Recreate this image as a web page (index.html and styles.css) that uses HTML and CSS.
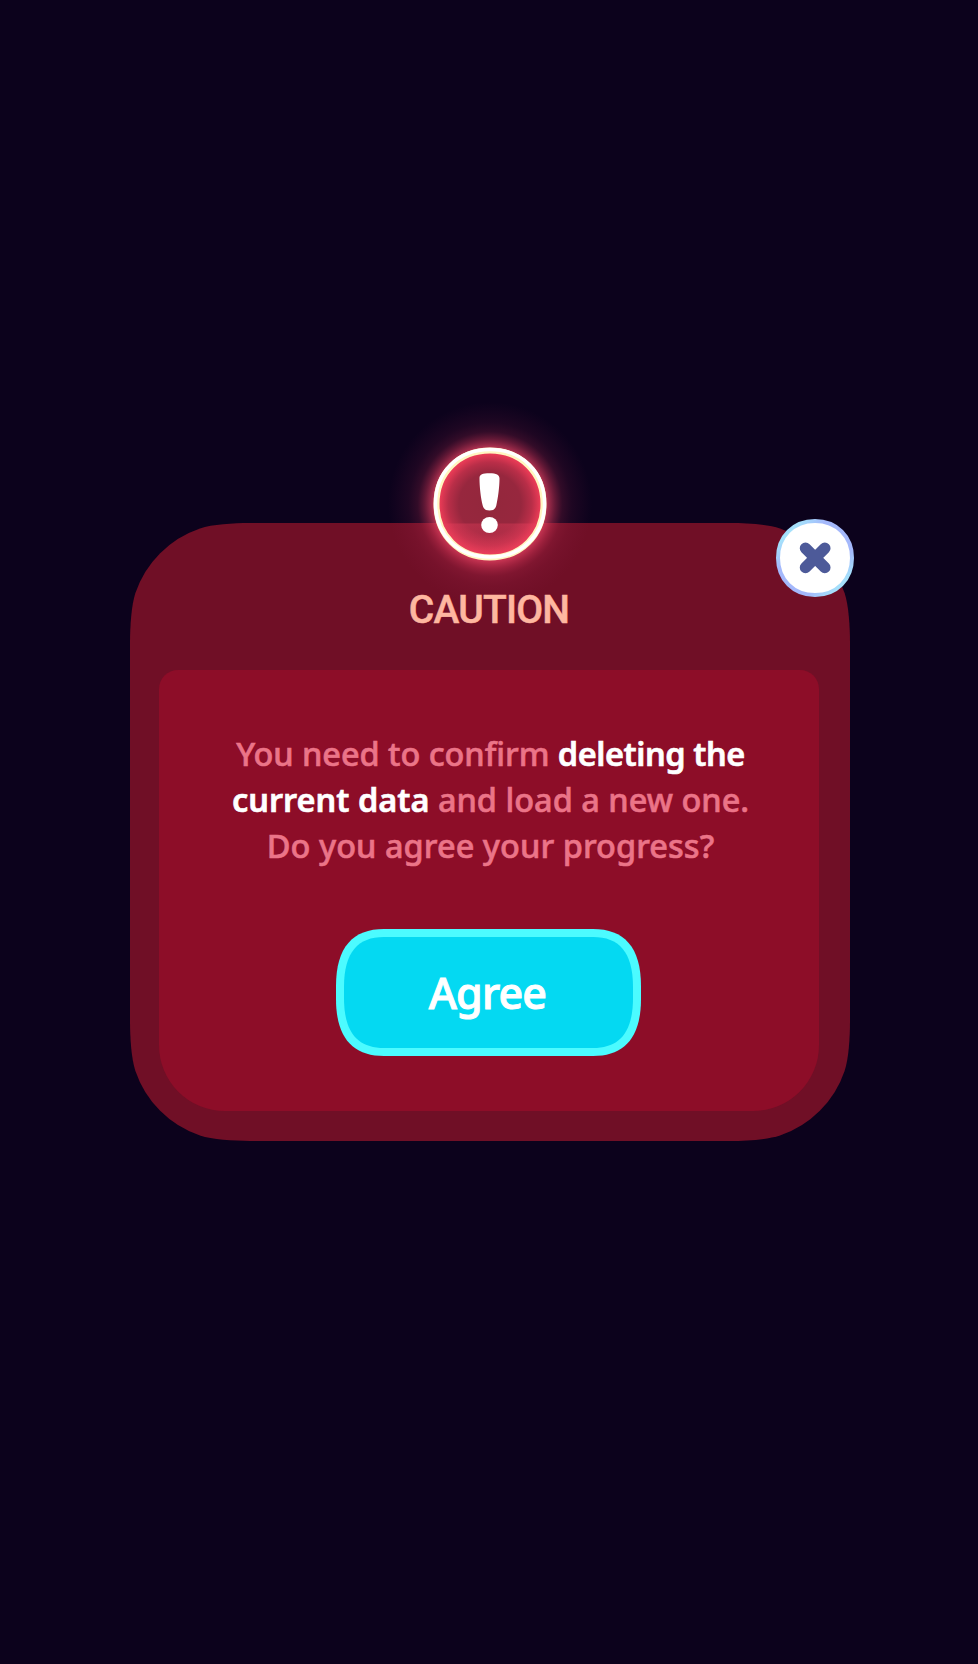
FILE: index.html
```html
<!DOCTYPE html>
<html lang="en">
<head>
<meta charset="utf-8">
<title>Caution</title>
<link rel="stylesheet" href="styles.css">
</head>
<body>
<main class="screen">
  <section class="dialog" role="dialog" aria-labelledby="title">
    <svg class="shape" viewBox="0 0 720 618" aria-hidden="true">
      <path fill="#700f26" d="M0 120C0 103 1.400 82 5.400 70A103 103 0 0 1 70 5.400C82 1.400 103 0 120 0H600C617 0 638 1.400 650 5.400A103 103 0 0 1 714.600 70C718.600 82 720 103 720 120V498C720 515 718.600 536 714.600 548A103 103 0 0 1 650 612.600C638 616.600 617 618 600 618H120C103 618 82 616.600 70 612.600A103 103 0 0 1 5.400 548C1.400 536 0 515 0 498Z"/>
    </svg>
    <svg class="badge" viewBox="0 0 240 240" aria-hidden="true">
      <defs>
        <radialGradient id="inner">
          <stop offset="0" stop-color="#93273c"/>
          <stop offset=".58" stop-color="#97273e"/>
          <stop offset=".78" stop-color="#b92e48"/>
          <stop offset=".93" stop-color="#e63a55"/>
          <stop offset="1" stop-color="#f04460"/>
        </radialGradient>
        <radialGradient id="heat" cx=".5" cy=".2" r=".9">
          <stop offset="0" stop-color="#e03a58" stop-opacity=".3"/>
          <stop offset="1" stop-color="#f04460" stop-opacity=".6"/>
        </radialGradient>
        <radialGradient id="halo">
          <stop offset=".52" stop-color="#f64868" stop-opacity=".9"/>
          <stop offset=".57" stop-color="#e23f60" stop-opacity=".7"/>
          <stop offset=".64" stop-color="#cc3355" stop-opacity=".45"/>
          <stop offset=".71" stop-color="#b42c50" stop-opacity=".23"/>
          <stop offset=".8" stop-color="#a62850" stop-opacity=".12"/>
          <stop offset="1" stop-color="#902050" stop-opacity="0"/>
        </radialGradient>
        <clipPath id="disc"><circle cx="120" cy="120" r="53.500"/></clipPath>
      </defs>
      <circle cx="120" cy="120" r="102" fill="url(#halo)"/>
      <path d="M66.500 120C66.500 89 89 66.500 120 66.500S173.500 89 173.500 120 151 173.500 120 173.500 66.500 151 66.500 120Z" fill="url(#inner)"/>
      <rect x="60" y="139.500" width="120" height="40" fill="url(#heat)" clip-path="url(#disc)"/>
      <path d="M66.500 120C66.500 89 89 66.500 120 66.500S173.500 89 173.500 120 151 173.500 120 173.500 66.500 151 66.500 120Z" fill="none" stroke="#fff6c0" stroke-width="6"/>
      <path d="M65.500 119.500C65.500 88 88 65.500 120 65.500S174.500 88 174.500 119.500 152 173 120 173 65.500 151 65.500 119.500Z" fill="none" stroke="#fff" stroke-width="3.500"/>
      <path fill="#fff" d="M109.500 94C109.500 90.500 112.500 89.300 119.500 89.300S129.500 91 129.500 94.500C129.500 103 128 114 126.300 121.500C125.500 125 123.500 126.500 119.500 126.500S113.500 125 112.700 121.500C110.800 114 109.500 103 109.500 94Z"/>
      <ellipse cx="119.500" cy="141" rx="8.300" ry="8" fill="#fff"/>
    </svg>
    <button class="close" aria-label="Close">
      <svg viewBox="0 0 80 80">
        <defs>
          <linearGradient id="edge" x1="0" y1="0" x2="1" y2="1">
            <stop offset="0" stop-color="#a4b8fb"/>
            <stop offset=".15" stop-color="#a5e2fb"/>
            <stop offset=".32" stop-color="#a4b8fb"/>
            <stop offset=".7" stop-color="#a4b8fb"/>
            <stop offset=".86" stop-color="#a5e2fb"/>
            <stop offset="1" stop-color="#a4b8fb"/>
          </linearGradient>
        </defs>
        <path d="M3 40C3 18.500 18.500 3 40 3S77 18.500 77 40 61.500 77 40 77 3 61.500 3 40Z" fill="#fff" stroke="url(#edge)" stroke-width="4"/>
        <path d="M30.500 30.200L49.800 49.500M49.800 30.200L30.500 49.500" fill="none" stroke="#4d5a99" stroke-width="11.500" stroke-linecap="round"/>
      </svg>
    </button>
    <h1 class="title" id="title">CAUTION</h1>
    <div class="panel">
      <p class="message">
        <span class="line one">You need to confirm <strong>deleting the</strong></span>
        <span class="line two"><strong>current data</strong> and load a new one.</span>
        <span class="line three">Do you agree your progress?</span>
      </p>
      <button class="agree">
        <svg class="shape" viewBox="0 0 305 127" aria-hidden="true">
          <path fill="#4cfbff" d="M0 57C0 18 17 0 48 0H257C288 0 305 18 305 57V70C305 109 288 127 257 127H48C17 127 0 109 0 70Z"/>
          <path fill="#04d9f2" d="M8 58C8 23 22 8 48 8H257C283 8 297 23 297 58V69C297 104 283 119 257 119H48C22 119 8 104 8 69Z"/>
        </svg>
        <span class="label">Agree</span>
      </button>
    </div>
  </section>
</main>
</body>
</html>
```
FILE: styles.css
```css
* { box-sizing: border-box; }
body { margin: 0; background: #0c021c; }
.screen {
  display: flex;
  align-items: center;
  justify-content: center;
  height: 1664px;
  padding-left: 2px;
  font-family: "Noto Sans", "Open Sans", sans-serif;
}
.dialog {
  position: relative;
  width: 720px;
  height: 618px;
  padding: 147px 31px 30px 29px;
}
.shape { position: absolute; inset: 0; width: 100%; height: 100%; }
.badge {
  position: absolute;
  top: -139.500px;
  left: 239.500px;
  width: 240px;
  height: 240px;
}
button { border: 0; padding: 0; background: none; font-family: inherit; }
.close {
  position: absolute;
  top: -5px;
  left: 645px;
  width: 80px;
  height: 80px;
}
.close svg { display: block; }
.title {
  position: absolute;
  top: 59px;
  left: 0;
  width: 718px;
  margin: 0;
  color: #feb7a0;
  font-family: Roboto, "Open Sans", sans-serif;
  font-size: 39px;
  font-weight: 500;
  letter-spacing: -.8px;
  line-height: 56px;
  text-align: center;
  -webkit-text-stroke: .5px #feb7a0;
}
.panel {
  position: relative;
  display: flex;
  flex-direction: column;
  align-items: center;
  height: 441px;
  padding-top: 61px;
  background: #8d0d28;
  border-radius: 19px 19px 66px 66px;
}
.message {
  width: 100%;
  margin: 0 0 60px;
  padding-left: 3px;
  color: #eb7488;
  font-size: 32.500px;
  font-weight: 500;
  line-height: 46px;
  text-align: center;
  -webkit-text-stroke: .6px currentColor;
}
.line { display: block; white-space: nowrap; }
.one { letter-spacing: -.05px; }
.one strong { letter-spacing: -.45px; }
.three { letter-spacing: .05px; }
.message strong { color: #fff; font-weight: 600; }
.agree {
  position: relative;
  width: 305px;
  height: 127px;
  margin-right: 1px;
  color: #fff;
  font-size: 43px;
  font-weight: 500;
  letter-spacing: -.8px;
  -webkit-text-stroke: 1px #fff;
}
.label { position: relative; left: -1px; }
```
